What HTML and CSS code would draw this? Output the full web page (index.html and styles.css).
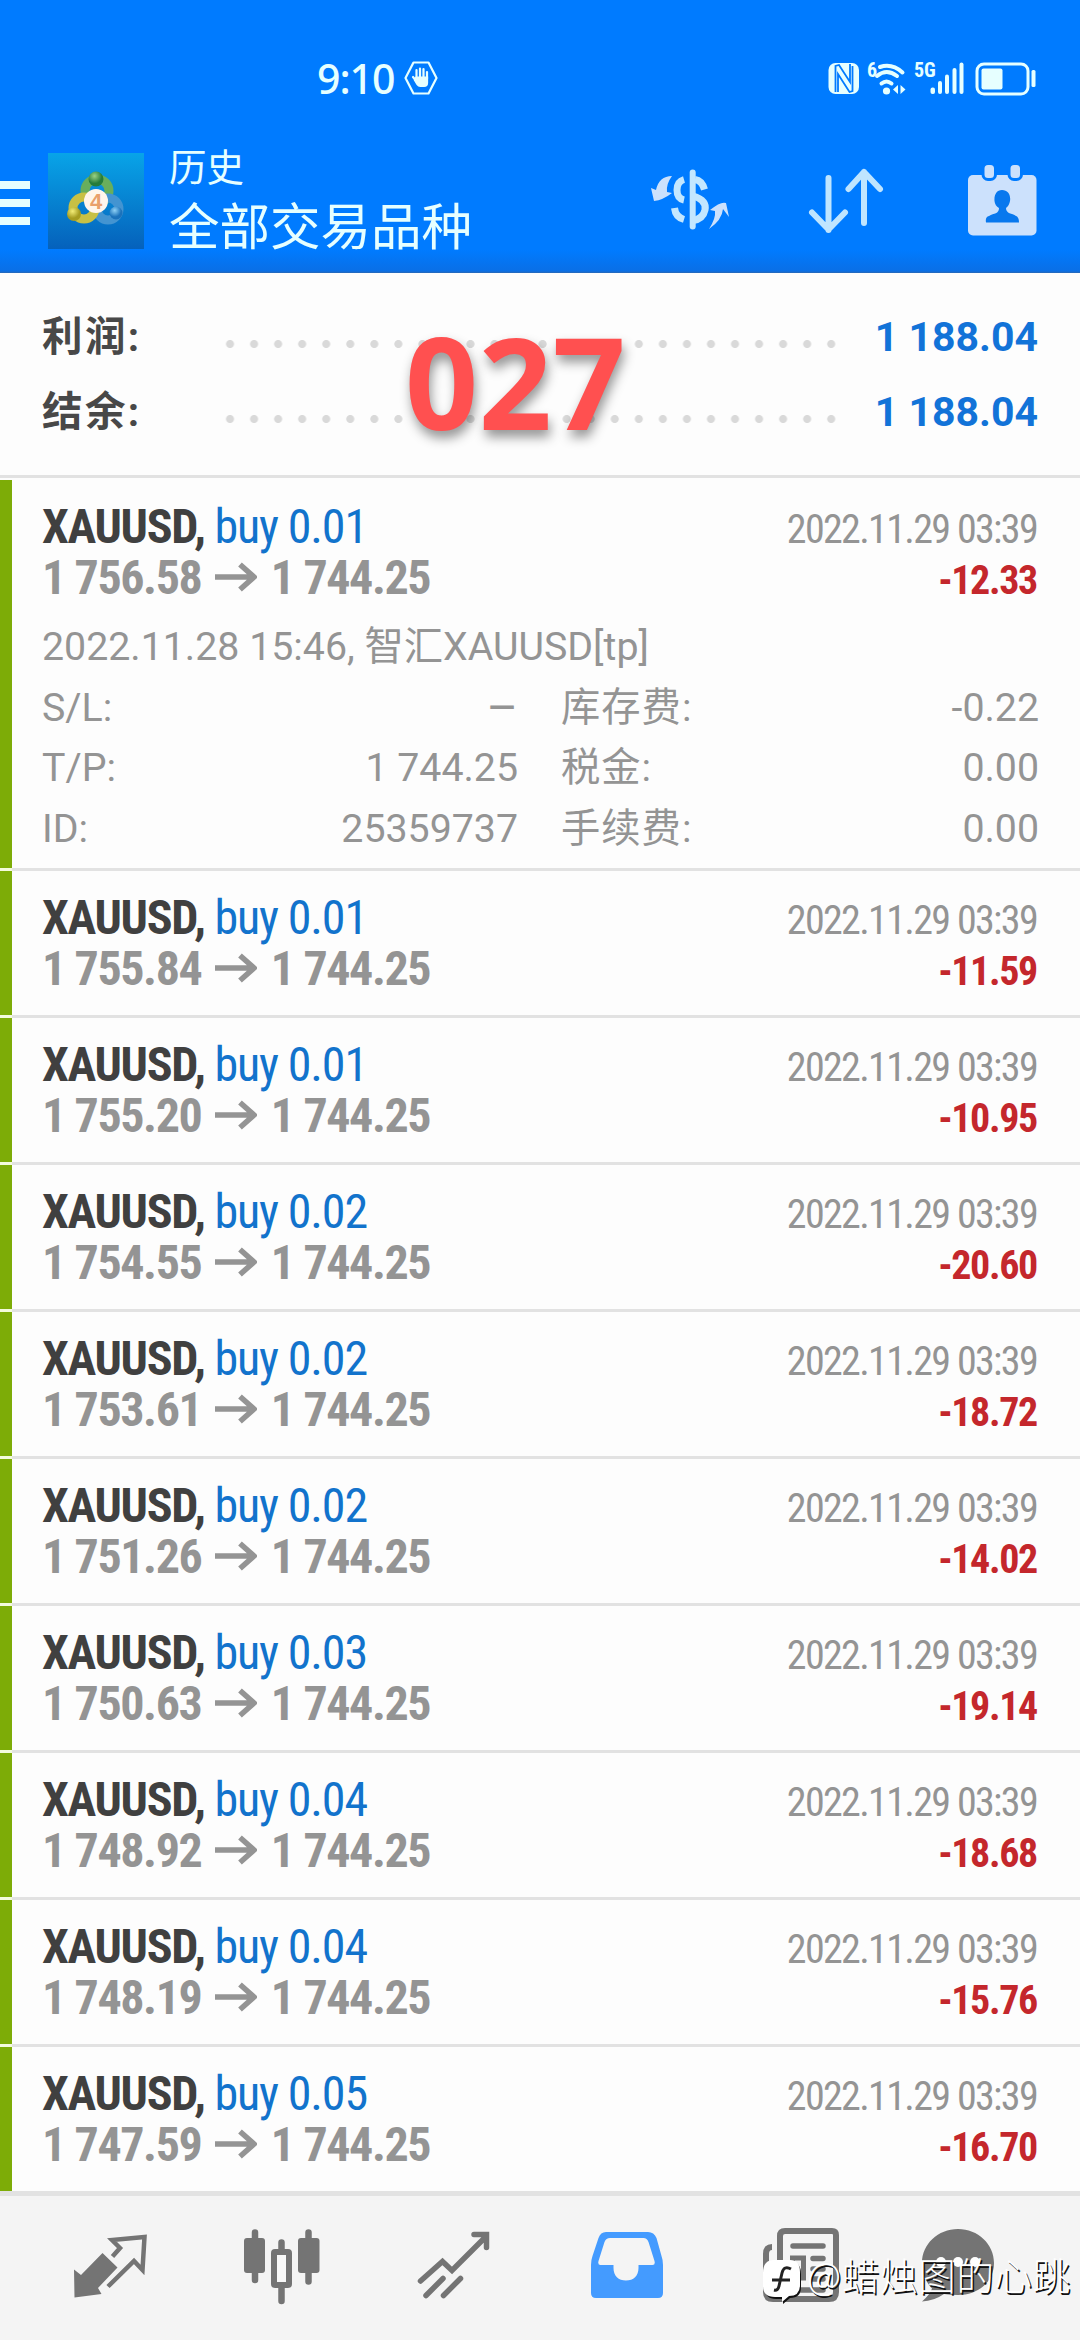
FILE: index.html
```html
<!DOCTYPE html>
<html lang="zh-CN">
<head>
<meta charset="utf-8">
<title>历史</title>
<link rel="stylesheet" href="styles.css">
</head>
<body>
<header class="header">
  <div class="status">
    <div class="clock">
      <span class="time">9:10</span>
      <svg width="34" height="34" viewBox="0 0 34 34"><path d="M9.500 1.500h15L32.500 17l-8 15.500h-15L1.500 17z" fill="none" stroke="#e6ffff" stroke-width="2.200" stroke-linejoin="round"/><path d="M12.500 9v8M16 7.500v9M19.500 8v9M23 11v7M9 16l5 6" stroke="#e6ffff" stroke-width="2.200" stroke-linecap="round"/><path d="M11.500 15.500h12.600v6.500q0 4-4 4h-4q-2 0-3.500-2l-3-5z" fill="#e6ffff"/></svg>
    </div>
    <svg width="210" height="50" viewBox="826 51 210 50" fill="#e6ffff" class="tray">
      <rect x="827.500" y="63" width="30.500" height="31" rx="7"/>
      <path d="M834.500 92V66l3.500-1 11 17V64M837 92V74l11.500 18 3-1V66" fill="none" stroke="#007bff" stroke-width="1.800"/>
      <text x="866" y="77" class="tiny">6</text>
      <g fill="none" stroke="#e6ffff" stroke-width="4" stroke-linecap="round"><path d="M879 67q12-4 22.500 5.500M876 76q9.500-8 20 0M880.500 83.500q5-4 10 0"/></g>
      <circle cx="885.500" cy="91" r="3.600"/><path d="M897 85v9l-5-4.500zM899.500 85v9l5-4.500z"/>
      <text x="913" y="77" class="tiny">5G</text>
      <rect x="929.500" y="87.500" width="4.500" height="6.500" rx="2"/><rect x="937" y="81" width="4" height="13" rx="2"/><rect x="944" y="74.500" width="4" height="19.500" rx="2"/><rect x="951.500" y="68" width="4" height="26" rx="2"/><rect x="958.500" y="62.500" width="4" height="31.500" rx="2"/>
      <rect x="976" y="64" width="51" height="30" rx="7" fill="none" stroke="#e6ffff" stroke-width="3"/><rect x="980.500" y="68.500" width="21" height="21" rx="2"/><rect x="1030.500" y="70" width="4" height="17" rx="1.500"/>
    </svg>
  </div>
  <div class="bar">
    <svg class="menu" width="30" height="44" viewBox="0 0 30 44" fill="#e6ffff"><path d="M0 0h30v8H0zM0 18h30v8H0zM0 36h30v8H0z"/></svg>
    <svg class="logo" width="96" height="96" viewBox="0 0 96 96">
      <defs>
        <linearGradient id="sky" x1="0" y1="0" x2="0" y2="1"><stop offset="0" stop-color="#08a4e8"/><stop offset="1" stop-color="#0561bb"/></linearGradient>
        <radialGradient id="green" cx=".4" cy=".3"><stop offset="0" stop-color="#9bd283"/><stop offset="1" stop-color="#257c3b"/></radialGradient>
        <radialGradient id="gold" cx=".4" cy=".3"><stop offset="0" stop-color="#f2ed77"/><stop offset="1" stop-color="#a59c20"/></radialGradient>
        <radialGradient id="azure" cx=".4" cy=".3"><stop offset="0" stop-color="#8ed0f5"/><stop offset="1" stop-color="#1b72bb"/></radialGradient>
      </defs>
      <rect width="96" height="96" fill="url(#sky)"/>
      <circle cx="49" cy="38" r="12" fill="none" stroke="#68ae5c" stroke-width="9"/>
      <circle cx="60" cy="56" r="11" fill="none" stroke="#4394d1" stroke-width="9"/>
      <circle cx="36" cy="55" r="11" fill="none" stroke="#c8c044" stroke-width="9"/>
      <circle cx="48" cy="26" r="7.500" fill="url(#green)"/>
      <circle cx="68" cy="60" r="6.500" fill="url(#azure)"/>
      <circle cx="26" cy="61" r="7" fill="url(#gold)"/>
      <circle cx="48" cy="48" r="12" fill="#fff5ec"/>
      <text x="48" y="56" text-anchor="middle" class="four">4</text>
    </svg>
    <div class="titles"><div class="title">历史</div><div class="subtitle">全部交易品种</div></div>
    <svg class="actions" width="388" height="74" viewBox="650 163 388 74" fill="#cce1fc">
      <g fill="none" stroke="#c3e7ff" stroke-width="7"><path d="M684 179.500q-7 2-7 10.500t7 10M674.500 208q1 9 9.500 11.500M695 179.500q7 1 9.500 10M693 196q14 4 12 14-2 9-12 10.500"/><path d="M692.700 172.500v54" stroke-width="6" stroke-linecap="round"/></g>
      <path d="M672 176q-13 0-16 14l-5-2 3 13q9-1 18-8l-5-1q-1-8 5-16zM709 229q13-9 14-20l6 8-3-14q-5-2-16 7l5 1q1 7-6 18z"/>
      <g fill="none" stroke="#bfe5ff" stroke-width="6" stroke-linecap="round" stroke-linejoin="round"><path d="M828.500 178v52M812 212.500l16.500 17 16.500-17M864 223v-51M848.500 189l15.500-17 16 17"/></g>
      <rect x="968" y="175" width="68.500" height="60.500" rx="5"/>
      <g stroke="#007bff" stroke-width="3"><rect x="983" y="163.500" width="12.500" height="16" rx="5"/><rect x="1009" y="163.500" width="12.500" height="16" rx="5"/></g>
      <path d="M1002 190c6 0 9 5 8 11q-1 5-4 7c0 6 6 5 10 8q3 1 3 6.500h-33q-1-5.500 3-6.500c5-3 10-2 10-8q-4-2-4.500-7c-.500-6 2-11 7.500-11z" fill="#0878ee"/>
    </svg>
  </div>
</header>
<section class="summary">
  <div class="sum"><span class="k">利润:</span><span class="dots"></span><span class="v">1 188.04</span></div>
  <div class="sum"><span class="k">结余:</span><span class="dots"></span><span class="v">1 188.04</span></div>
  <div class="stamp">027</div>
</section>
<svg class="defs" width="0" height="0"><symbol id="to" viewBox="0 0 42 30"><path d="M0 15h38M25 2.500L39 15 25 27.500" fill="none" stroke="#949494" stroke-width="5.500"/></symbol></svg>
<main class="list">
  <article class="deal open">
    <div class="line"><span class="sym">XAUUSD, <span class="side">buy 0.01</span></span><span class="date">2022.11.29 03:39</span></div>
    <div class="line"><span class="price">1 756.58<svg class="to"><use href="#to"/></svg>1 744.25</span><span class="loss">-12.33</span></div>
    <div class="detail">
      <div class="wide">2022.11.28 15:46, 智汇XAUUSD[tp]</div>
      <div class="pair"><span>S/L:</span><span class="dash">–</span></div><div class="pair"><span class="cn">库存费:</span><span>-0.22</span></div>
      <div class="pair"><span>T/P:</span><span>1 744.25</span></div><div class="pair"><span class="cn">税金:</span><span>0.00</span></div>
      <div class="pair"><span>ID:</span><span>25359737</span></div><div class="pair"><span class="cn">手续费:</span><span>0.00</span></div>
    </div>
  </article>
  <article class="deal">
    <div class="line"><span class="sym">XAUUSD, <span class="side">buy 0.01</span></span><span class="date">2022.11.29 03:39</span></div>
    <div class="line"><span class="price">1 755.84<svg class="to"><use href="#to"/></svg>1 744.25</span><span class="loss">-11.59</span></div>
  </article>
  <article class="deal">
    <div class="line"><span class="sym">XAUUSD, <span class="side">buy 0.01</span></span><span class="date">2022.11.29 03:39</span></div>
    <div class="line"><span class="price">1 755.20<svg class="to"><use href="#to"/></svg>1 744.25</span><span class="loss">-10.95</span></div>
  </article>
  <article class="deal">
    <div class="line"><span class="sym">XAUUSD, <span class="side">buy 0.02</span></span><span class="date">2022.11.29 03:39</span></div>
    <div class="line"><span class="price">1 754.55<svg class="to"><use href="#to"/></svg>1 744.25</span><span class="loss">-20.60</span></div>
  </article>
  <article class="deal">
    <div class="line"><span class="sym">XAUUSD, <span class="side">buy 0.02</span></span><span class="date">2022.11.29 03:39</span></div>
    <div class="line"><span class="price">1 753.61<svg class="to"><use href="#to"/></svg>1 744.25</span><span class="loss">-18.72</span></div>
  </article>
  <article class="deal">
    <div class="line"><span class="sym">XAUUSD, <span class="side">buy 0.02</span></span><span class="date">2022.11.29 03:39</span></div>
    <div class="line"><span class="price">1 751.26<svg class="to"><use href="#to"/></svg>1 744.25</span><span class="loss">-14.02</span></div>
  </article>
  <article class="deal">
    <div class="line"><span class="sym">XAUUSD, <span class="side">buy 0.03</span></span><span class="date">2022.11.29 03:39</span></div>
    <div class="line"><span class="price">1 750.63<svg class="to"><use href="#to"/></svg>1 744.25</span><span class="loss">-19.14</span></div>
  </article>
  <article class="deal">
    <div class="line"><span class="sym">XAUUSD, <span class="side">buy 0.04</span></span><span class="date">2022.11.29 03:39</span></div>
    <div class="line"><span class="price">1 748.92<svg class="to"><use href="#to"/></svg>1 744.25</span><span class="loss">-18.68</span></div>
  </article>
  <article class="deal">
    <div class="line"><span class="sym">XAUUSD, <span class="side">buy 0.04</span></span><span class="date">2022.11.29 03:39</span></div>
    <div class="line"><span class="price">1 748.19<svg class="to"><use href="#to"/></svg>1 744.25</span><span class="loss">-15.76</span></div>
  </article>
  <article class="deal">
    <div class="line"><span class="sym">XAUUSD, <span class="side">buy 0.05</span></span><span class="date">2022.11.29 03:39</span></div>
    <div class="line"><span class="price">1 747.59<svg class="to"><use href="#to"/></svg>1 744.25</span><span class="loss">-16.70</span></div>
  </article>
</main>
<nav class="nav">
  <svg viewBox="24 2196 172 144"><path d="M74 2269.500l7 5.500 21.500-22 15 14.500-19.500 20.500 3.500 6-27 3.500z" fill="#747474"/><path d="M108 2286.500l26-25.500 8.500 9 2-33-32.500 3 8 8-7.500 8.500" fill="none" stroke="#747474" stroke-width="4.500"/></svg>
  <svg viewBox="196 2196 172 144" fill="#747474"><rect x="244" y="2238" width="21" height="35" rx="3"/><rect x="298" y="2238" width="21.500" height="35" rx="3"/><path d="M255 2232.500v47.500M308.500 2232.500v49M281.500 2242.500v9M281.500 2287v14" stroke="#747474" stroke-width="6.500" stroke-linecap="round"/><rect x="274" y="2252" width="15" height="33" rx="1" fill="#f8f8f8" stroke="#747474" stroke-width="6"/></svg>
  <svg viewBox="368 2196 172 144"><path d="M420.500 2281l22-19.500 9.500 9 34-34M474 2234.500h12.500v13M426 2295.500l17-17M443.500 2295.500l17-17" fill="none" stroke="#747474" stroke-width="5.500" stroke-linecap="round"/></svg>
  <svg viewBox="540 2196 172 144"><path fill-rule="evenodd" fill="#449bff" d="M606 2232h42q6 0 8.500 6l5 18q1.500 4 1.500 9v28q0 5-5 5h-62q-5 0-5-5v-28q0-5 1.500-9l6-18q2-6 7.500-6zM610 2238q-4 0-5.500 4l-6 19q-1 4 2 4h13v3c0 8 5 12.500 12.500 12.500s12.500-4.500 12.500-12.500v-3h14q3 0 2-4l-6-19q-1.500-4-5-4z"/></svg>
  <svg viewBox="712 2196 172 144"><path d="M772 2247q-6 0-6 7v38q0 7 7 7h56q7 0 7-7v-57q0-4-4-4h-47q-5 0-5 5v53q0 4-4 5" fill="none" stroke="#747474" stroke-width="6"/><path d="M793 2246h30M813 2258.500h10M813 2269h10M813 2279h10M793 2290h30" stroke="#747474" stroke-width="5.500" stroke-linecap="round"/><rect x="792.500" y="2258" width="11" height="20" fill="none" stroke="#747474" stroke-width="5"/></svg>
  <svg viewBox="884 2196 172 144"><path d="M958 2229c20 0 36 15 36 34s-16 32-36 32q-8 0-14-1-10 7-22 7.500 8-7 10-13c-6-6-10-16-10-25.500 0-19 16-34 36-34z" fill="#747474"/><g fill="#fff"><circle cx="941" cy="2262" r="5"/><circle cx="958" cy="2262" r="5"/><circle cx="975" cy="2262" r="5"/></g></svg>
</nav>
<div class="mark">
  <svg width="40" height="46" viewBox="0 0 40 46"><path d="M12 3h16q10 0 10 12v13q0 11-11 11l-7 6v-5h-7Q2 40 2 29V15Q2 3 12 3z" fill="#111"/><path d="M11 1h16q10 0 10 12v13q0 11-11 11l-7 6v-5h-7Q0 38 0 27V14Q0 1 11 1z" fill="#fff"/><path d="M28 10q-7-4-9 4l-3 13q-1 5-5 4M9 21h18" fill="none" stroke="#222" stroke-width="3"/></svg>
  <span>@蜡烛图的心跳</span>
</div>
</body>
</html>
```
FILE: styles.css
```css
* { box-sizing: border-box; }
body {
  margin: 0;
  width: 1080px;
  height: 2340px;
  position: relative;
  overflow: hidden;
  background: #fdfdfd;
  font-family: Roboto, "Noto Sans CJK SC", sans-serif;
}
svg { display: block; flex: none; }
.header {
  height: 273px;
  background: linear-gradient(#007bff 250px, #0a6fe6 271px, #2b68b4 273px);
  color: #e6ffff;
}
.status {
  height: 153px;
  padding: 60px 43px 0 317px;
  display: flex;
  justify-content: space-between;
  align-items: flex-start;
}
.clock { display: flex; align-items: center; gap: 10px; height: 36px; }
.time { font: 500 41px/36px "Noto Sans", sans-serif; width: 77px; letter-spacing: -1px; }
.tray { margin-top: -9px; }
.tiny { font: 700 20px "Roboto Condensed", sans-serif; }
.bar { display: flex; height: 96px; padding-right: 42px; }
.menu { margin-top: 28px; }
.logo { margin-left: 18px; }
.four { font: 700 22px "Liberation Sans", sans-serif; fill: #e9a06c; }
.titles { margin: -9px 0 0 25px; width: 310px; white-space: nowrap; }
.title { font-size: 37.500px; line-height: 48px; }
.subtitle { font-size: 50.500px; line-height: 72px; }
.actions { margin: 10px 0 0 auto; }

.summary {
  position: relative;
  height: 205px;
  padding: 27px 42px 0;
  border-bottom: 3px solid #e2e2e2;
}
.sum { display: flex; height: 75px; line-height: 75px; align-items: center; }
.k { flex: none; width: 176px; font-size: 40.500px; font-weight: 700; color: #484848; letter-spacing: 2.400px; }
.dots {
  flex: none;
  width: 626px;
  height: 8px;
  margin-top: 12px;
  background: radial-gradient(circle, #d9d9d9 3.600px, transparent 4.400px) 0 0 / 24.060px 8px;
}
.v { margin-left: auto; font-size: 41px; font-weight: 700; color: #1273d8; white-space: nowrap; }
.stamp {
  position: absolute;
  left: 405px;
  top: 43px;
  font: 700 128px/129px "Noto Sans", sans-serif;
  letter-spacing: .500px;
  color: #ff5050;
  text-shadow: 2px 7px 12px rgba(0, 0, 0, .42);
}

.defs { position: absolute; }
.list { padding-top: 2px; height: 1713px; overflow: hidden; }
.deal {
  height: 147px;
  padding: 21px 42px 0 30px;
  border-left: 12px solid #7dac07;
  position: relative;
}
.deal::after {
  content: "";
  position: absolute;
  left: -12px;
  right: 0;
  bottom: 0;
  height: 3px;
  background: linear-gradient(90deg, #f3fbdc 12px, #e2e2e2 12px);
}
.open { height: 391px; }
.deal:last-child::after { display: none; }
.line {
  display: flex;
  justify-content: space-between;
  align-items: baseline;
  height: 51px;
  line-height: 51px;
  font-family: "Roboto Condensed", Roboto, sans-serif;
  white-space: nowrap;
}
.sym { font-size: 48px; font-weight: 700; color: #404040; letter-spacing: -1.300px; }
.side { font-weight: 400; color: #1273cc; letter-spacing: -1.150px; }
.price { font-size: 48px; font-weight: 700; color: #949494; letter-spacing: -1.400px; }
.to { display: inline-block; width: 42px; height: 30px; margin: 0 14px 0 13.500px; vertical-align: 2px; }
.date { font-size: 40px; color: #949494; letter-spacing: -1.650px; }
.loss { font-size: 40px; font-weight: 700; color: #c4272c; letter-spacing: -1.350px; }
.date, .loss { padding-right: 1px; }
.detail {
  display: grid;
  grid-template-columns: 476px 478px;
  column-gap: 43px;
  grid-auto-rows: 60.700px;
  margin-top: 14px;
  font-size: 39.300px;
  line-height: 60.700px;
  color: #949494;
}
.wide { grid-column: 1 / 3; }
.pair { display: flex; justify-content: space-between; }
.cn { letter-spacing: 1px; }
.dash { font-size: 48px; }

.nav {
  height: 149px;
  border-top: 5px solid #e2e2e2;
  background: #f4f4f4;
  padding-left: 24px;
  display: flex;
}
.nav svg { width: 172px; height: 144px; }
.mark {
  position: absolute;
  left: 763px;
  top: 2259px;
  display: flex;
  gap: 4px;
  font: 300 37.500px/30px "Noto Sans CJK SC", sans-serif;
  letter-spacing: .700px;
  color: #fff;
  white-space: nowrap;
  text-shadow: 1.500px 1.500px 0 #111;
}
```
